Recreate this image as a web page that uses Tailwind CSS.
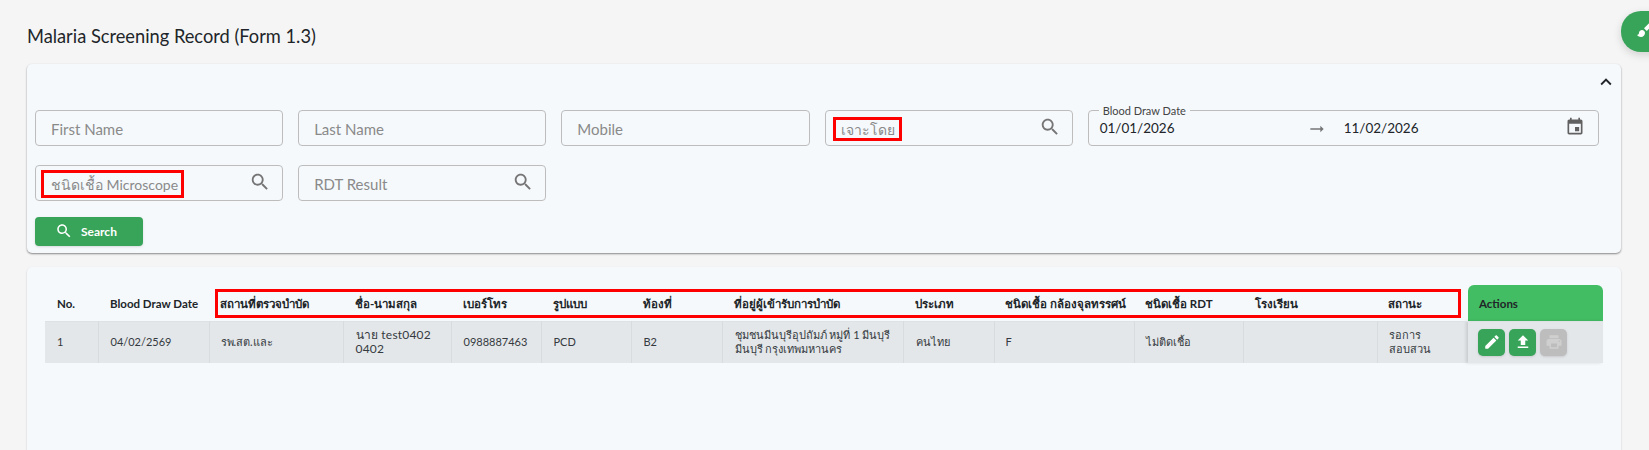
<!DOCTYPE html>
<html lang="th">
<head>
    <meta charset="UTF-8">
    <meta name="viewport" content="width=device-width, initial-scale=1.0">
    <script src="https://cdn.jsdelivr.net/npm/@tailwindcss/browser@4"></script>
    <title>Malaria Screening Record</title>
</head>
<body class="relative h-[450px] overflow-hidden bg-[#f5f5f5] font-['Lato','Noto_Sans','DejaVu_Sans',sans-serif] text-[#212529]">
    <!--floating theme button-->
    <button class="absolute top-[11px] left-[1621px] w-[50px] h-[41px] pl-[14px] pt-[5px] flex items-start rounded-[20px] bg-[#38a459] shadow-[0_3px_8px_rgba(0,0,0,0.15)] text-white">
        <svg class="w-[24px] h-[24px] shrink-0" viewBox="0 0 24 24" fill="currentColor"><path d="M7 14c-1.66 0-3 1.34-3 3 0 1.31-1.16 2-2 2 .92 1.22 2.49 2 4 2 2.21 0 4-1.79 4-4 0-1.66-1.34-3-3-3zm13.71-9.37l-1.34-1.34c-.39-.39-1.02-.39-1.41 0L9 12.25 11.75 15l8.96-8.96c.39-.39.39-1.02 0-1.41z"/></svg>
    </button>

    <div class="px-[27px]">
        <h1 class="h-[64px] pt-[24px] text-[18.25px] leading-[24px] font-normal">Malaria Screening Record (Form 1.3)</h1>

        <!--filter card-->
        <div class="w-[1594px] h-[189px] px-2 rounded-[5px] bg-[#f5f9fc] shadow-[0_1px_2px_rgba(0,0,0,0.45)]">
            <div class="flex justify-end h-[46px] pt-[7px] -mr-[4px]">
                <svg class="w-[22px] h-[22px] text-[#212529]" viewBox="0 0 24 24" fill="currentColor"><path d="M7.41 15.41L12 10.83l4.59 4.58L18 14l-6-6-6 6z"/></svg>
            </div>
            <div class="grid grid-cols-6 gap-x-[15px] gap-y-[19px] w-[1564px]">
                <input class="h-[36px] pt-[2px] px-[15px] border border-[#bdbdbd] rounded-[4px] text-[15px] placeholder:text-[#8a8a8a] outline-none" placeholder="First Name">
                <input class="h-[36px] pt-[2px] px-[15px] border border-[#bdbdbd] rounded-[4px] text-[15px] placeholder:text-[#8a8a8a] outline-none" placeholder="Last Name">
                <input class="h-[36px] pt-[2px] px-[15px] border border-[#bdbdbd] rounded-[4px] text-[15px] placeholder:text-[#8a8a8a] outline-none" placeholder="Mobile">
                <div class="flex items-center justify-between h-[36px] pl-[15px] pr-[11px] border border-[#bdbdbd] rounded-[4px]">
                    <span class="pt-[2px] text-[14px] text-[#8a8a8a]">เจาะโดย</span>
                    <svg class="w-[22px] h-[22px] text-[#757575] -mt-[3px]" viewBox="0 0 24 24" fill="currentColor"><path d="M15.5 14h-.79l-.28-.27C15.41 12.59 16 11.11 16 9.5 16 5.91 13.09 3 9.5 3S3 5.91 3 9.5 5.91 16 9.5 16c1.61 0 3.09-.59 4.23-1.57l.27.28v.79l5 4.99L20.49 19l-4.99-5zm-6 0C7.01 14 5 11.99 5 9.5S7.01 5 9.5 5 14 7.01 14 9.5 11.99 14 9.5 14z"/></svg>
                </div>
                <div class="relative col-span-2 flex items-center h-[36px] pt-[1px] pl-[11px] pr-[13px] border border-[#bdbdbd] rounded-[4px] text-[13.5px]">
                    <span class="absolute -top-[7px] left-[10px] px-[4px] bg-[#f5f9fc] text-[11px] leading-[13px] text-[#444]">Blood Draw Date</span>
                    <span class="w-[207px]">01/01/2026</span>
                    <svg class="w-[20px] h-[20px] text-[#757575]" viewBox="0 0 24 24" fill="currentColor"><path d="M16.01 11H4v2h12.01v3L20 12l-3.99-4z"/></svg>
                    <span class="ml-[17px] grow">11/02/2026</span>
                    <svg class="w-[20px] h-[20px] text-[#616161] -mt-[4px]" viewBox="0 0 24 24" fill="currentColor"><path d="M17 12h-5v5h5v-5zM16 1v2H8V1H6v2H5c-1.11 0-1.99.9-1.99 2L3 19c0 1.1.89 2 2 2h14c1.1 0 2-.9 2-2V5c0-1.1-.9-2-2-2h-1V1h-2zm3 18H5V8h14v11z"/></svg>
                </div>
                <div class="flex items-center justify-between h-[36px] pl-[15px] pr-[11px] border border-[#bdbdbd] rounded-[4px]">
                    <span class="pt-[2px] text-[14px] text-[#8a8a8a]">ชนิดเชื้อ Microscope</span>
                    <svg class="w-[22px] h-[22px] text-[#757575] -mt-[3px]" viewBox="0 0 24 24" fill="currentColor"><path d="M15.5 14h-.79l-.28-.27C15.41 12.59 16 11.11 16 9.5 16 5.91 13.09 3 9.5 3S3 5.91 3 9.5 5.91 16 9.5 16c1.61 0 3.09-.59 4.23-1.57l.27.28v.79l5 4.99L20.49 19l-4.99-5zm-6 0C7.01 14 5 11.99 5 9.5S7.01 5 9.5 5 14 7.01 14 9.5 11.99 14 9.5 14z"/></svg>
                </div>
                <div class="flex items-center justify-between h-[36px] pl-[15px] pr-[11px] border border-[#bdbdbd] rounded-[4px]">
                    <span class="pt-[2px] text-[15px] text-[#8a8a8a]">RDT Result</span>
                    <svg class="w-[22px] h-[22px] text-[#757575] -mt-[3px]" viewBox="0 0 24 24" fill="currentColor"><path d="M15.5 14h-.79l-.28-.27C15.41 12.59 16 11.11 16 9.5 16 5.91 13.09 3 9.5 3S3 5.91 3 9.5 5.91 16 9.5 16c1.61 0 3.09-.59 4.23-1.57l.27.28v.79l5 4.99L20.49 19l-4.99-5zm-6 0C7.01 14 5 11.99 5 9.5S7.01 5 9.5 5 14 7.01 14 9.5 11.99 14 9.5 14z"/></svg>
                </div>
            </div>
            <button class="flex items-center gap-[8px] mt-[16px] pl-[20px] w-[108px] h-[29px] rounded-[4px] bg-[#38a459] shadow text-white text-[12px] font-bold">
                <svg class="w-[18px] h-[18px] -mt-[2px]" viewBox="0 0 24 24" fill="currentColor"><path d="M15.5 14h-.79l-.28-.27C15.41 12.59 16 11.11 16 9.5 16 5.91 13.09 3 9.5 3S3 5.91 3 9.5 5.91 16 9.5 16c1.61 0 3.09-.59 4.23-1.57l.27.28v.79l5 4.99L20.49 19l-4.99-5zm-6 0C7.01 14 5 11.99 5 9.5S7.01 5 9.5 5 14 7.01 14 9.5 11.99 14 9.5 14z"/></svg>
                Search
            </button>
        </div>

        <!--table card-->
        <div class="relative w-[1594px] h-[300px] mt-[14px] pt-[18px] pl-[18px] rounded-[5px] bg-[#f5f9fc] shadow-[0_1px_2px_rgba(0,0,0,0.2)]">
            <table class="table-fixed w-[1558px] border-collapse text-[11px] leading-[14px] text-[#343a40]">
                <colgroup>
                    <col class="w-[53px]"><col class="w-[111px]"><col class="w-[134px]"><col class="w-[108px]"><col class="w-[90px]"><col class="w-[90px]"><col class="w-[91px]"><col class="w-[181px]"><col class="w-[91px]"><col class="w-[140px]"><col class="w-[109px]"><col class="w-[134px]"><col class="w-[91px]"><col class="w-[135px]">
                </colgroup>
                <thead>
                    <tr class="h-[36px] text-left text-[11.5px] text-[#212529] font-bold">
                        <th class="px-[12px] pt-[2px]">No.</th>
                        <th class="px-[12px] pt-[2px] whitespace-nowrap">Blood Draw Date</th>
                        <th class="px-[11px] pt-[2px]">สถานที่ตรวจบำบัด</th>
                        <th class="px-[12px] pt-[2px]">ชื่อ-นามสกุล</th>
                        <th class="px-[12px] pt-[2px]">เบอร์โทร</th>
                        <th class="px-[12px] pt-[2px]">รูปแบบ</th>
                        <th class="px-[12px] pt-[2px]">ท้องที่</th>
                        <th class="px-[12px] pt-[2px]">ที่อยู่ผู้เข้ารับการบำบัด</th>
                        <th class="px-[12px] pt-[2px]">ประเภท</th>
                        <th class="px-[11px] pt-[2px] whitespace-nowrap">ชนิดเชื้อ กล้องจุลทรรศน์</th>
                        <th class="px-[11px] pt-[2px]">ชนิดเชื้อ RDT</th>
                        <th class="px-[12px] pt-[2px]">โรงเรียน</th>
                        <th class="px-[11px] pt-[2px]">สถานะ</th>
                        <th class="px-[11px] pt-[2px] rounded-t-[6px] bg-[#43bd63]">Actions</th>
                    </tr>
                </thead>
                <tbody>
                    <tr class="h-[42px] bg-[#e4e7ea] border-t border-[#dfe2e5]">
                        <td class="px-[12px] border-r border-[#d9dcdf]">1</td>
                        <td class="px-[12px] border-r border-[#d9dcdf]">04/02/2569</td>
                        <td class="px-[11px] border-r border-[#d9dcdf]">รพ.สต.และ</td>
                        <td class="px-[12px] border-r border-[#d9dcdf] text-[12px] tracking-[0.2px]">นาย test0402 0402</td>
                        <td class="px-[12px] border-r border-[#d9dcdf]">0988887463</td>
                        <td class="px-[12px] border-r border-[#d9dcdf]">PCD</td>
                        <td class="px-[12px] border-r border-[#d9dcdf]">B2</td>
                        <td class="px-[12px] border-r border-[#d9dcdf]">ชุมชนมีนบุรีอุปถัมภ์ หมู่ที่ 1 มีนบุรี มีนบุรี กรุงเทพมหานคร</td>
                        <td class="px-[12px] border-r border-[#d9dcdf]">คนไทย</td>
                        <td class="px-[11px] border-r border-[#d9dcdf]">F</td>
                        <td class="px-[11px] border-r border-[#d9dcdf]">ไม่ติดเชื้อ</td>
                        <td class="px-[12px] border-r border-[#d9dcdf]"></td>
                        <td class="px-[11px]">รอการ สอบสวน</td>
                        <td class="pl-[10px] shadow-[-2px_0_3px_rgba(0,0,0,0.12)]">
                            <div class="flex gap-[4px]">
                                <button class="flex items-center justify-center w-[27px] h-[27px] rounded-[5px] bg-[#38a459] text-white shadow-sm">
                                    <svg class="w-[18px] h-[18px]" viewBox="0 0 24 24" fill="currentColor"><path d="M3 17.25V21h3.75L17.81 9.94l-3.75-3.75L3 17.25zM20.71 7.04c.39-.39.39-1.02 0-1.41l-2.34-2.34c-.39-.39-1.02-.39-1.41 0l-1.83 1.83 3.75 3.75 1.83-1.83z"/></svg>
                                </button>
                                <button class="flex items-center justify-center w-[27px] h-[27px] rounded-[5px] bg-[#38a459] text-white shadow-sm">
                                    <svg class="w-[18px] h-[18px]" viewBox="0 0 24 24" fill="currentColor"><path d="M9 16h6v-6h4l-7-7-7 7h4v6zm-4 2h14v2H5v-2z"/></svg>
                                </button>
                                <button class="flex items-center justify-center w-[27px] h-[27px] rounded-[5px] bg-[#bdbdbd] text-[#cfcfcf] shadow-sm">
                                    <svg class="w-[18px] h-[18px]" viewBox="0 0 24 24" fill="currentColor"><path d="M19 8H5c-1.66 0-3 1.34-3 3v6h4v4h12v-4h4v-6c0-1.66-1.34-3-3-3zm-3 11H8v-5h8v5zm3-7c-.55 0-1-.45-1-1s.45-1 1-1 1 .45 1 1-.45 1-1 1zm-1-9H6v4h12V3z"/></svg>
                                </button>
                            </div>
                        </td>
                    </tr>
                </tbody>
            </table>
        </div>
    </div>

    <!--red annotation boxes drawn over the screenshot-->
    <div class="absolute left-[833px] top-[117px] w-[69px] h-[24px] border-[3px] border-[#f00]"></div>
    <div class="absolute left-[41px] top-[170px] w-[143px] h-[28px] border-[3px] border-[#f00]"></div>
    <div class="absolute left-[215px] top-[289px] w-[1246px] h-[29px] border-[3px] border-[#f00]"></div>
</body>
</html>
